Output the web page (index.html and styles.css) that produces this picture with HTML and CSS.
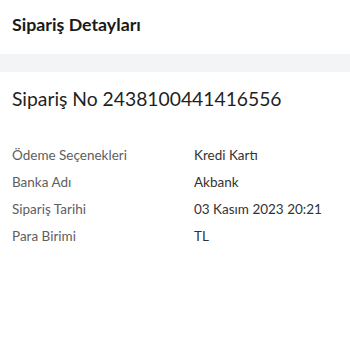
FILE: index.html
```html
<!DOCTYPE html>
<html lang="tr">
<head>
<meta charset="utf-8">
<link rel="stylesheet" href="styles.css">
</head>
<body>
<header class="header"><h1 class="title">Sipariş Detayları</h1></header>
<div class="band"></div>
<main class="content">
  <h2 class="order-no">Sipariş No 2438100441416556</h2>
  <dl class="details">
    <dt>Ödeme Seçenekleri</dt><dd>Kredi Kartı</dd>
    <dt>Banka Adı</dt><dd>Akbank</dd>
    <dt>Sipariş Tarihi</dt><dd>03 Kasım 2023 20:21</dd>
    <dt>Para Birimi</dt><dd>TL</dd>
  </dl>
</main>
</body>
</html>
```
FILE: styles.css
```css
html, body {
  margin: 0;
  padding: 0;
  background: #ffffff;
  font-family: Lato, "Open Sans", sans-serif;
}
.header {
  padding: 15px 12px 20px;
}
.title {
  margin: 0;
  font-size: 17.8px;
  line-height: 19px;
  font-weight: 700;
  color: #1a1a1a;
}
.band {
  height: 18px;
  background: #f3f4f6;
}
.content {
  padding: 16px 12px 0;
}
.order-no {
  margin: 0;
  font-size: 19.3px;
  font-weight: 400;
  line-height: 22px;
  color: #1f1f1f;
}
.details {
  margin: 32px 0 0;
  display: grid;
  grid-template-columns: 182px 1fr;
  grid-auto-rows: 27px;
  font-size: 13.5px;
  line-height: 27px;
}
.details dt {
  color: #5e5e5e;
}
.details dd {
  margin: 0;
  color: #333333;
}
```
